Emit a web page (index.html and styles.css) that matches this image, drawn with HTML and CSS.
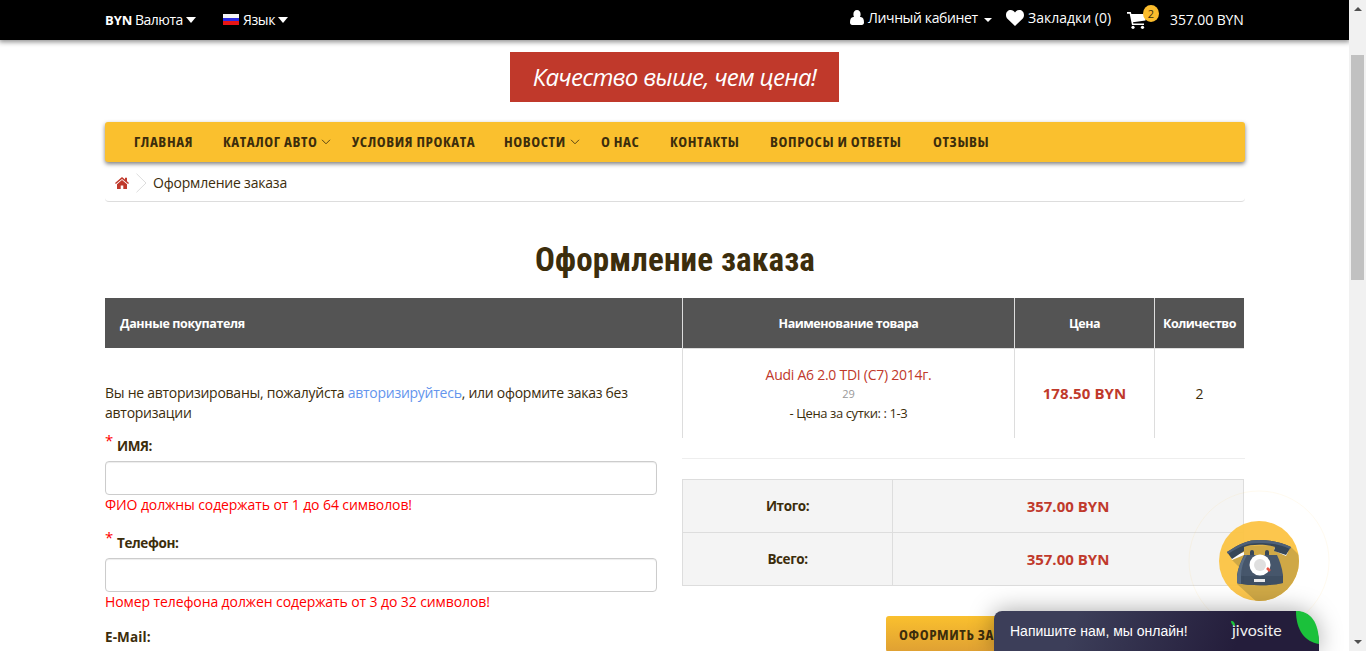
FILE: index.html
```html
<!DOCTYPE html>
<html lang="ru">
<head>
<meta charset="utf-8">
<title>Оформление заказа</title>
<link rel="stylesheet" href="styles.css">
</head>
<body>
<div class="window">
  <div class="page">
    <header class="topbar">
      <div class="container topbar-inner">
        <div class="top-item currency"><b>BYN</b><span>Валюта</span><i class="drop"></i></div>
        <div class="top-item language"><span class="flag"></span><span>Язык</span><i class="drop"></i></div>
        <div class="top-item account">
          <svg width="14" height="15" viewBox="0 0 14 14" preserveAspectRatio="none"><path fill="#fff" d="M7 0C4.800 0 3.400 1.600 3.400 4c0 1.500.6 2.900 1.500 3.600h4.200C10 6.900 10.600 5.500 10.600 4 10.600 1.600 9.200 0 7 0ZM3.300 6.500C1 6.700 0 8.500 0 11.700 0 13.100.9 14 2.200 14h9.600c1.300 0 2.200-.9 2.200-2.300 0-3.200-1-5-3.300-5.200Z"/></svg>
          <span>Личный кабинет</span><i class="caret"></i>
        </div>
        <div class="top-item wishlist">
          <svg width="18" height="16" viewBox="0 0 18 16"><path fill="#fff" d="M9 16 1.700 9C.6 7.900 0 6.600 0 5 0 2 2 0 4.800 0 6.600 0 8 .9 9 2.400 10 .9 11.400 0 13.200 0 16 0 18 2 18 5c0 1.600-.6 2.900-1.700 4Z"/></svg>
          <span>Закладки (0)</span>
        </div>
        <div class="top-item cart">
          <span class="cart-icon">
            <svg width="19" height="17" viewBox="0 0 19 17"><path fill="#fff" d="M0 0h3.800l.6 2H18.500v6.500L6 10.200l.3 1.300H17V13H5L2.700 1.700H0Z"/><circle cx="6" cy="15.300" r="1.600" fill="#fff"/><circle cx="15.500" cy="15.300" r="1.600" fill="#fff"/></svg>
            <span class="badge">2</span>
          </span>
          <span class="cart-total">357.00 BYN</span>
        </div>
      </div>
    </header>

    <main class="container content">
      <div class="slogan">Качество выше, чем цена!</div>

      <nav class="menu">
        <a>ГЛАВНАЯ</a>
        <a class="has-sub">КАТАЛОГ АВТО<svg width="10" height="6" viewBox="0 0 10 6"><path d="m1 .8 4 4 4-4" fill="none" stroke="#5a4513"/></svg></a>
        <a>УСЛОВИЯ ПРОКАТА</a>
        <a class="has-sub">НОВОСТИ<svg width="10" height="6" viewBox="0 0 10 6"><path d="m1 .8 4 4 4-4" fill="none" stroke="#5a4513"/></svg></a>
        <a>О НАС</a>
        <a>КОНТАКТЫ</a>
        <a>ВОПРОСЫ И ОТВЕТЫ</a>
        <a>ОТЗЫВЫ</a>
      </nav>

      <div class="breadcrumb">
        <svg class="home" width="14" height="12" viewBox="0 0 14 12"><path fill="#c0392b" d="m7 0 3 2.500V.8h2v3.400L14 6l-.9 1L7 1.900.9 7 0 6Z"/><path fill="#c0392b" d="m7 3.100 5 4.200V12H8.300V8.500H5.700V12H2V7.300Z"/></svg>
        <svg class="sep" width="11" height="20" viewBox="0 0 11 20"><path d="m.5.700 9.500 9.300-9.500 9.300" fill="none" stroke="#ddd"/></svg>
        <span>Оформление заказа</span>
      </div>

      <h1>Оформление заказа</h1>

      <div class="checkout">
        <section class="buyer">
          <div class="th th-buyer">Данные покупателя</div>
          <div class="form">
            <p class="intro">Вы не авторизированы, пожалуйста <a>авторизируйтесь</a>, или оформите заказ без<br>авторизации</p>
            <div class="field">
              <label><sup>*</sup>ИМЯ:</label>
              <input type="text">
              <p class="error">ФИО должны содержать от 1 до 64 символов!</p>
            </div>
            <div class="field">
              <label><sup>*</sup>Телефон:</label>
              <input type="text">
              <p class="error">Номер телефона должен содержать от 3 до 32 символов!</p>
            </div>
            <div class="field"><label class="email">E-Mail:</label></div>
          </div>
        </section>

        <section class="order">
          <div class="products">
            <div class="th">Наименование товара</div>
            <div class="th">Цена</div>
            <div class="th">Количество</div>
            <div class="td product">
              <a class="name">Audi A6 2.0 TDI (C7) 2014г.</a>
              <span class="model">29</span>
              <span class="option">- Цена за сутки: : 1-3</span>
            </div>
            <div class="td price">178.50 BYN</div>
            <div class="td qty">2</div>
          </div>
          <div class="totals">
            <div class="total-label">Итого:</div><div class="price">357.00 BYN</div>
            <div class="total-label">Всего:</div><div class="price">357.00 BYN</div>
          </div>
          <button class="submit">ОФОРМИТЬ ЗАКАЗ</button>
        </section>
      </div>
    </main>

    <div class="callback">
      <svg width="142" height="142" viewBox="0 0 142 142">
        <defs><clipPath id="disc"><circle cx="71" cy="71" r="40"/></clipPath></defs>
        <circle cx="71" cy="71" r="70" fill="none" stroke="#fac02e" stroke-opacity=".08"/>
        <g opacity=".95">
          <circle cx="71" cy="71" r="40" fill="#fcc444"/>
          <path clip-path="url(#disc)" fill="#cda43d" d="M44 70l12-14 30-1 2 6 11 3 4-7 30 30-42 45L49 94l3-16Z"/>
          <path fill="#fff" d="m43 67 13-5 0 3-12 5ZM86 58l14 4-2 4-11-5Z"/>
          <path fill="#2d3e50" d="M39 62C53 53 60 50 71 50c12 0 22 2 32 7l-5 8-12-4 1-4c-8-3-24-3-31 0l0 4-12 8Z"/>
          <path fill="#465972" d="M39 62C53 53 60 50 71 50c12 0 22 2 32 7l-1 2c-9-4-18-6-31-6-11 0-19 3-31 11Z"/>
          <rect x="62" y="60" width="4" height="8" rx="2" fill="#2d3e50"/><rect x="77" y="60" width="4" height="8" rx="2" fill="#2d3e50"/>
          <path fill="#3d4e64" d="M56 65h33c3 6 5 13 6 20v8c-13 3-33 3-46 0v-8c1-7 4-14 7-20Z"/>
          <path fill="#34455a" d="M49 86h46v7c-13 3-33 3-46 0Z"/>
          <path fill="#51657d" d="M57 65c-4 6-7 13-8 21h4c0-7 2-14 6-21ZM49 86h4v8l-4-1Z"/>
          <circle cx="72" cy="75" r="10.500" fill="#fff"/><circle cx="72" cy="75" r="6" fill="#dedede"/>
          <path d="m79 78 3 3" stroke="#e64c3c" stroke-width="2.500"/>
          <path fill="#e8e8e8" d="M66 89h11v3H66Z"/>
        </g>
      </svg>
    </div>

    <div class="chat">
      <span class="chat-text">Напишите нам, мы онлайн!</span>
      <span class="chat-logo">jivosite<svg width="5" height="5" viewBox="0 0 5 5"><path fill="#1bc13b" d="M0 0c3 0 4 2 4 5C2 4.500 0 3 0 0Z"/></svg></span>
      <svg class="leaf" width="23" height="33" viewBox="0 0 23 33"><path fill="#1bc13b" d="M0 0c14 0 23 10 23 33C9 31 0 19 0 0Z"/></svg>
    </div>
  </div>

  <div class="scrollbar">
    <i class="arrow up"></i>
    <i class="thumb"></i>
    <i class="arrow down"></i>
  </div>
</div>
</body>
</html>
```
FILE: styles.css
```css
* { box-sizing: border-box; }
body { margin: 0; background: #fff; color: #3c2d0c; font: 14px/20px "Open Sans", sans-serif; overflow: hidden; }
p, h1 { margin: 0; }
.window { display: flex; height: 651px; overflow: hidden; }
.page { position: relative; width: 1349px; height: 651px; overflow: hidden; }
.container { width: 1140px; margin-left: 105px; }

.topbar { position: relative; height: 40px; background: #000; color: #fff; box-shadow: 0 1px 5px 1px rgba(0, 0, 0, .45); white-space: nowrap; }
.topbar-inner { display: flex; height: 36px; }
.top-item { display: flex; flex: none; align-items: center; }
.currency { width: 118px; padding-top: 3px; }
.currency b { width: 30px; font-size: 13px; letter-spacing: -.1px; }
.currency span { width: 51px; letter-spacing: -.5px; }
.language { width: 627px; padding-top: 3px; }
.language span + span { width: 35px; margin-left: 4px; letter-spacing: -.4px; }
.flag { width: 16px; height: 11px; background: linear-gradient(#f5f5f5 0 36%, #2a2ae0 36% 68%, #e81515 68%); }
.drop { border: 5.500px solid transparent; border-top: 6px solid #fff; border-bottom: 0; }
.caret { border: 4px solid transparent; border-top-color: #fff; border-bottom: 0; margin: 4px 0 0 6px; }
.account { width: 156px; padding-bottom: 1px; }
.account span { width: 110px; margin-left: 4px; letter-spacing: -.37px; }
.wishlist { width: 121px; padding-bottom: 1px; }
.wishlist span { margin-left: 4px; }
.cart { padding-top: 4px; }
.cart-icon { position: relative; display: flex; width: 43px; }
.cart-total { letter-spacing: -.1px; }
.badge { position: absolute; left: 16px; top: -7px; width: 16px; height: 17px; border-radius: 50%; background: #fbbc2c; color: #3c2d0c; font-size: 11px; line-height: 17px; text-align: center; }

.content { display: flex; flex-direction: column; padding-top: 12px; }
.slogan { align-self: center; width: 329px; height: 50px; margin-right: 1px; background: #c0392b; color: #fff; font: italic 24px/50px "Open Sans", sans-serif; letter-spacing: -.7px; text-align: center; white-space: nowrap; }
.menu { display: grid; grid-template-columns: 89px 129px 152px 97px 69px 100px 163px auto; height: 40px; margin-top: 20px; padding-left: 29px; border-radius: 3px; background: #fac02e; box-shadow: 0 2px 4px rgba(0, 0, 0, .5); font-size: 15px; font-weight: 700; font-stretch: 75%; letter-spacing: .6px; line-height: 38px; white-space: nowrap; }
.has-sub { display: flex; align-items: center; height: 38px; }
.has-sub svg { margin: 2px 0 0 4px; }
.breadcrumb { display: flex; align-items: center; height: 40px; padding: 2px 0 0 10px; border-bottom: 1px solid #ddd; border-radius: 4px; letter-spacing: -.2px; }
.breadcrumb .sep { margin: 0 6px 0 7px; }
h1 { margin: 35px 0 16px; font: 700 33px/45px Roboto, sans-serif; font-stretch: 75%; letter-spacing: .15px; text-align: center; }

.checkout { display: flex; }
.buyer { width: 577px; }
.th { height: 50px; background: #545454; color: #fff; font: 700 12.500px/52px "Open Sans", sans-serif; letter-spacing: -.48px; text-align: center; white-space: nowrap; }
.th-buyer { padding-left: 15px; letter-spacing: -.38px; text-align: left; }
.form { width: 552px; padding-top: 35px; }
.intro { letter-spacing: -.26px; white-space: nowrap; }
.intro a { color: #6495ed; }
.field { height: 97px; padding-top: 13px; }
.field label { display: block; height: 25px; font-weight: 700; font-size: 13.500px; letter-spacing: -.4px; }
.field sup { display: inline-block; width: 12px; color: red; font-weight: 400; font-size: 15px; line-height: 0; vertical-align: 5px; }
.field .email { letter-spacing: .1px; padding-top: 7px; margin-top: -10px; }
.field input { display: block; width: 552px; height: 34px; border: 1px solid #ccc; border-radius: 4px; box-shadow: inset 0 1px 1px rgba(0, 0, 0, .075); }
.error { color: red; letter-spacing: -.1px; white-space: nowrap; }

.order { display: flex; flex-direction: column; width: 563px; }
.products { display: grid; grid-template-columns: 332px 140px 90px; grid-template-rows: 50px 90px; padding-bottom: 20px; border-bottom: 1px solid #eee; }
.products .th, .td { border-left: 1px solid #ddd; }
.td { display: flex; align-items: center; justify-content: center; border-top: 1px solid #ddd; }
.product { flex-direction: column; padding-top: 2px; }
.name { color: #c0392b; letter-spacing: -.26px; }
.model { color: #999; font-size: 11px; line-height: 17px; }
.option { font-size: 13px; letter-spacing: -.4px; line-height: 22px; }
.price { color: #c0392b; font-size: 15px; font-weight: 700; }
.td.price { padding-bottom: 1px; letter-spacing: .1px; }
.totals { display: grid; grid-template-columns: 210px 351px; grid-template-rows: 53px 53px; width: 562px; margin-top: 20px; border: 1px solid #ddd; border-width: 0 1px 1px 0; background: #f4f4f4; line-height: 53px; text-align: center; }
.totals > div { border: 1px solid #ddd; border-width: 1px 0 0 1px; }
.total-label { font-weight: 700; font-size: 13.500px; letter-spacing: -.4px; line-height: 52px; }
.submit { width: 155px; height: 36px; margin: 30px 0 0 204px; padding: 0 13px; border: 0; border-radius: 3px; background: linear-gradient(#fac02e, #dfa033); color: #3c2d0c; font: 700 15px/36px "Open Sans", sans-serif; font-stretch: 75%; letter-spacing: .6px; text-align: left; white-space: nowrap; }

.callback { position: absolute; left: 1188px; top: 490px; }
.callback svg { display: block; }
.chat { position: absolute; left: 994px; top: 611px; display: flex; width: 325px; height: 40px; border-radius: 8px 0 0; background: linear-gradient(110deg, #3c3e59 25%, #241d3b 75%); color: #fff; box-shadow: 0 0 24px rgba(0, 0, 0, .35); border-top-right-radius: 23px 33px; }
.chat-text { width: 221px; padding-left: 16px; font: 14px/40px "Liberation Sans", sans-serif; white-space: nowrap; }
.chat-logo { position: relative; width: 81px; padding-left: 17px; color: #eee; font: 16px/37px Lato, sans-serif; }
.chat-logo svg { position: absolute; left: 16px; top: 10px; }

.scrollbar { display: flex; flex-direction: column; align-items: center; width: 17px; background: #f1f1f1; }
.arrow { border: 4px solid transparent; }
.up { margin-top: 3px; border-bottom-color: #505050; }
.thumb { width: 13px; height: 225px; margin-top: 44px; background: #c1c1c1; }
.down { margin-top: 360px; border-top-color: #505050; }
```
